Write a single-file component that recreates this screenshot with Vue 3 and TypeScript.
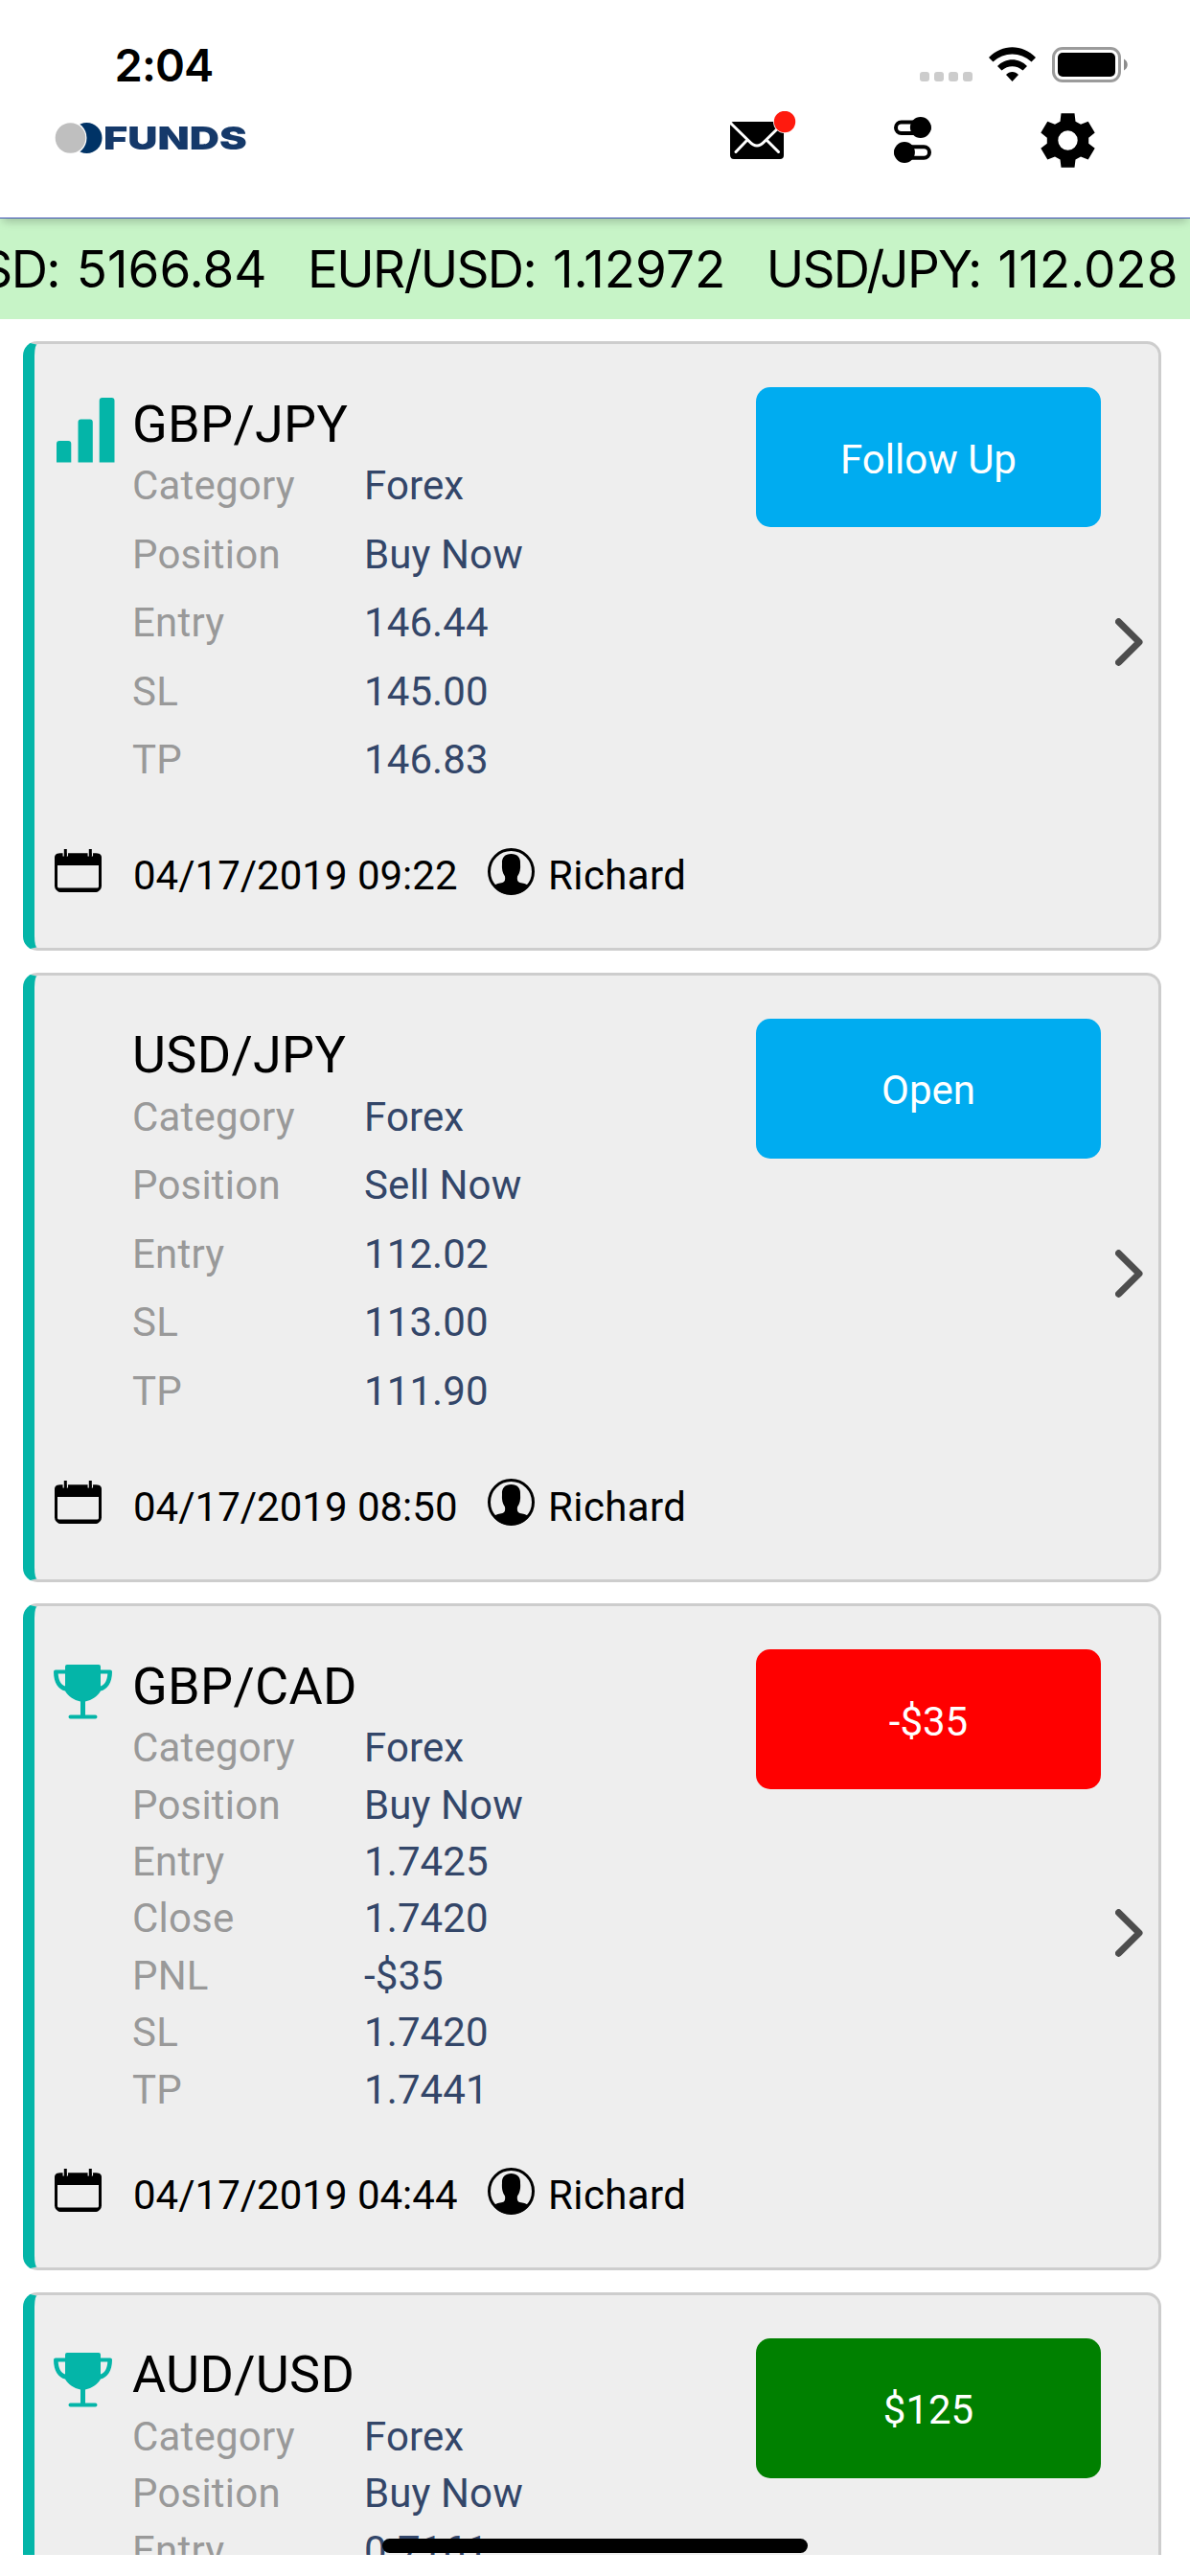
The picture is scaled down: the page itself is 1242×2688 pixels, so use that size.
<script setup lang="ts">
interface Row {
  label: string
  value: string
}

interface Quote {
  symbol: string
  price: string
}

interface Signal {
  pair: string
  icon: 'bars' | 'trophy' | null
  rows: Row[]
  action: string
  tone: 'blue' | 'red' | 'green'
  date?: string
  author?: string
}

const ticker: Quote[] = [
  { symbol: 'BTC/USD:', price: '5166.84' },
  { symbol: 'EUR/USD:', price: '1.12972' },
  { symbol: 'USD/JPY:', price: '112.028' },
]

const signals: Signal[] = [
  {
    pair: 'GBP/JPY',
    icon: 'bars',
    rows: [
      { label: 'Category', value: 'Forex' },
      { label: 'Position', value: 'Buy Now' },
      { label: 'Entry', value: '146.44' },
      { label: 'SL', value: '145.00' },
      { label: 'TP', value: '146.83' },
    ],
    action: 'Follow Up',
    tone: 'blue',
    date: '04/17/2019 09:22',
    author: 'Richard',
  },
  {
    pair: 'USD/JPY',
    icon: null,
    rows: [
      { label: 'Category', value: 'Forex' },
      { label: 'Position', value: 'Sell Now' },
      { label: 'Entry', value: '112.02' },
      { label: 'SL', value: '113.00' },
      { label: 'TP', value: '111.90' },
    ],
    action: 'Open',
    tone: 'blue',
    date: '04/17/2019 08:50',
    author: 'Richard',
  },
  {
    pair: 'GBP/CAD',
    icon: 'trophy',
    rows: [
      { label: 'Category', value: 'Forex' },
      { label: 'Position', value: 'Buy Now' },
      { label: 'Entry', value: '1.7425' },
      { label: 'Close', value: '1.7420' },
      { label: 'PNL', value: '-$35' },
      { label: 'SL', value: '1.7420' },
      { label: 'TP', value: '1.7441' },
    ],
    action: '-$35',
    tone: 'red',
    date: '04/17/2019 04:44',
    author: 'Richard',
  },
  {
    pair: 'AUD/USD',
    icon: 'trophy',
    rows: [
      { label: 'Category', value: 'Forex' },
      { label: 'Position', value: 'Buy Now' },
      { label: 'Entry', value: '0.7161' },
    ],
    action: '$125',
    tone: 'green',
  },
]
</script>

<template>
  <div class="screen">
    <header class="header">
      <div class="status">
        <span class="clock">2:04</span>
        <div class="indicators">
          <div class="dots"><i /><i /><i /><i /></div>
          <svg class="wifi" width="49" height="36" viewBox="0 0 49 36">
            <path d="M0 11C14-3.500 35-3.500 49 11L44.500 15.500C33 4.700 16 4.700 4.500 15.500Z" />
            <path d="M9 20C17.500 11 31.500 11 40 20L35.500 24.500C29 18.700 20 18.700 13.500 24.500Z" />
            <path d="M18 29C21.500 25 27.500 25 31 29L24.500 36Z" />
          </svg>
          <svg class="battery" width="80" height="37" viewBox="0 0 80 37">
            <rect x="1.500" y="1.500" width="69" height="34" rx="9.500" fill="none" stroke="#9b9b9b" stroke-width="3" />
            <rect x="6" y="6" width="60" height="25" rx="5" />
            <path d="M75 12.500C80 15 80 22 75 24.500Z" fill="#8c8c8c" />
          </svg>
        </div>
      </div>
      <div class="toolbar">
        <div class="logo">
          <svg width="52" height="36" viewBox="0 0 52 36">
            <circle cx="34.500" cy="18" r="16" fill="#003366" />
            <circle cx="16.500" cy="18" r="18" fill="#fff" />
            <circle cx="17.500" cy="18" r="15.800" fill="#bfbfbf" />
          </svg>
          <span class="brand">FUNDS</span>
        </div>
        <div class="tools">
          <svg class="mail" width="70" height="54" viewBox="0 0 70 54">
            <rect x="0" y="11" width="56" height="39" rx="4" />
            <path d="M-1 11L20 31.500C25.500 37.500 30.500 37.500 36 31.500L57 11M17.500 30.500L6 42.500M38.500 30.500L50.500 42.500" fill="none" stroke="#fff" stroke-width="3" stroke-linecap="round" />
            <circle cx="57" cy="11" r="12" fill="#fff" />
            <circle cx="57" cy="11" r="11.200" fill="#ff1a0e" />
          </svg>
          <svg class="toggles" width="39" height="48" viewBox="0 0 39 48">
            <rect x="2" y="5.500" width="35" height="11.500" rx="5.750" fill="none" stroke="#000" stroke-width="4" />
            <circle cx="27.800" cy="11" r="10.900" />
            <rect x="2" y="31.300" width="35" height="11.500" rx="5.750" fill="none" stroke="#000" stroke-width="4" />
            <circle cx="11" cy="37" r="10.900" />
          </svg>
          <svg class="gear" width="57" height="57" viewBox="0 0 57 57">
            <path fill-rule="evenodd" d="M21.500 0.300H35.500L36.500 8.700L42 11.800L49.700 8.700L56.700 20.600L50.200 25.700V31.700L56.700 36.700L49.700 48.500L42 45.400L36.500 48.500L35.500 56.700H21.500L20.500 48.500L15 45.400L7.300 48.500L0.300 36.700L6.800 31.700V25.700L0.300 20.600L7.300 8.700L15 11.800L20.500 8.700ZM28.500 18.300A10.200 10.200 0 1 0 28.500 38.700A10.200 10.200 0 1 0 28.500 18.300Z" />
          </svg>
        </div>
      </div>
    </header>

    <div class="ticker">
      <div v-for="quote in ticker" :key="quote.symbol" class="quote">
        <span class="symbol">{{ quote.symbol }}</span>
        <span class="price">{{ quote.price }}</span>
      </div>
    </div>

    <main class="list">
      <article v-for="signal in signals" :key="signal.pair" class="card" :class="{ tall: signal.icon === 'trophy' }">
        <div class="top">
          <div class="badge">
            <svg v-if="signal.icon === 'bars'" class="bars" width="61" height="68" viewBox="0 0 61 68">
              <path d="M0 67.500V48Q0 45 3 45H12.300Q15.300 45 15.300 48V67.500ZM22.500 67.500V25.500Q22.500 22.500 25.500 22.500H34.800Q37.800 22.500 37.800 25.500V67.500ZM44.700 67.500V3Q44.700 0 47.700 0H57.500Q60.500 0 60.500 3V67.500Z" />
            </svg>
            <svg v-else-if="signal.icon === 'trophy'" class="trophy" width="61" height="57" viewBox="0 0 61 57">
              <path d="M14 0H47Q49 0 49 2V5.500H59Q61 5.500 61 7.500C61 19 56 26 49 27.500C46 33 40 37 33 38.500V52.500H43.500A2 2 0 0 1 43.500 56.500H17.500A2 2 0 0 1 17.500 52.500H28V38.500C21 37 15 33 12 27.500C5 26 0 19 0 7.500Q0 5.500 2 5.500H12V2Q12 0 14 0ZM12 9.500H4.700C5 16 7.500 21 12 22.500ZM49 9.500V22.500C53.500 21 56 16 56.300 9.500Z" fill-rule="evenodd" />
            </svg>
          </div>
          <div class="details">
            <h2>{{ signal.pair }}</h2>
            <dl>
              <div v-for="row in signal.rows" :key="row.label" class="row">
                <dt>{{ row.label }}</dt>
                <dd>{{ row.value }}</dd>
              </div>
            </dl>
          </div>
          <button class="action" :class="signal.tone" type="button">{{ signal.action }}</button>
        </div>

        <svg class="chevron" width="29" height="50" viewBox="0 0 29 50">
          <path d="M3.500 3.700L25 25L3.500 46.300" fill="none" stroke="#4d4d4d" stroke-width="7" stroke-linecap="round" stroke-linejoin="round" />
        </svg>

        <footer v-if="signal.date" class="meta">
          <svg class="calendar" width="49" height="45" viewBox="0 0 49 45">
            <rect x="1.500" y="6" width="46" height="37" rx="4.500" fill="none" stroke="#000" stroke-width="3" />
            <path d="M0 17V9Q0 4.500 4.500 4.500H44.500Q49 4.500 49 9V17ZM2 40.500H47V42Q46 45 43 45H6Q3 45 2 42Z" />
            <path d="M9.300 3V7.500M13.300 3V7.500M35.300 3V7.500M39.300 3V7.500" stroke="#eee" stroke-width="1.500" />
            <path d="M11.300 0V7.500M37.300 0V7.500" stroke="#000" stroke-width="3" />
          </svg>
          <span class="date">{{ signal.date }}</span>
          <svg class="avatar" width="49" height="49" viewBox="0 0 49 49">
            <circle cx="24.500" cy="24.500" r="23" fill="none" stroke="#000" stroke-width="3" />
            <path d="M24.500 6C31 6 34.500 10 34 16C34.500 22 33.500 26 31 29.500C30.500 33 31 35 33.500 36C37 36.500 40 37 43 39.500C38.500 45.500 32 48.500 24.500 48.500S10.500 45.500 6 39.500C9 37 12 36.500 15.500 36C18 35 18.500 33 18 29.500C15.500 26 14.500 22 15 16C14.500 10 18 6 24.500 6Z" />
          </svg>
          <span class="author">{{ signal.author }}</span>
        </footer>
      </article>
    </main>

    <div class="home-indicator" />
  </div>
</template>

<style>
body {
  margin: 0;
  background: #fff;
}
</style>

<style scoped>
.screen {
  position: relative;
  width: 1242px;
  height: 2688px;
  overflow: hidden;
  display: flex;
  flex-direction: column;
  background: #fff;
  color: #000;
  font-family: Roboto, sans-serif;
}

.header {
  position: relative;
  z-index: 1;
  flex: none;
  box-sizing: border-box;
  height: 228px;
  border-bottom: 1px solid #3f51b5;
  background: #fff;
  box-shadow: 0 6px 9px -3px rgba(0, 0, 0, 0.22);
}

.status {
  display: flex;
  justify-content: space-between;
  box-sizing: border-box;
  height: 106px;
  padding: 38px 64px 0 119.500px;
}

.clock {
  font: 600 47px/60px Inter, sans-serif;
  letter-spacing: -0.900px;
}

.indicators {
  display: flex;
  align-items: flex-start;
  padding-top: 11px;
}

.dots {
  display: flex;
  gap: 5px;
  padding-top: 26px;
}

.dots i {
  width: 10px;
  height: 10px;
  border-radius: 3px;
  background: #ccc;
}

.wifi {
  margin-left: 17px;
}

.battery {
  margin-left: 17px;
}

.toolbar {
  display: flex;
  justify-content: space-between;
  padding: 10px 99.500px 0 56px;
}

.logo {
  display: flex;
  height: 36px;
  padding-top: 10px;
  filter: blur(0.7px);
}

.logo svg {
  flex: none;
}

.brand {
  color: #15396a;
  font: 900 33px/36px Inter, sans-serif;
  transform: scaleX(1.310);
  transform-origin: left center;
}

.tools {
  display: flex;
  align-items: flex-start;
}

.toggles {
  margin: 6px 0 0 101px;
}

.gear {
  margin: 2px 0 0 113.500px;
}

.ticker {
  flex: none;
  display: flex;
  justify-content: flex-end;
  gap: 42.500px;
  box-sizing: border-box;
  height: 105px;
  padding: 21px 12.500px 0 0;
  overflow: hidden;
  background: #c7f4c7;
  font: 400 53px/64px Inter, sans-serif;
  white-space: nowrap;
}

.quote {
  flex: none;
  display: flex;
  gap: 18px;
}

.symbol {
  letter-spacing: -1.700px;
}

.price {
  letter-spacing: 0;
}

.list {
  flex: none;
  display: flex;
  flex-direction: column;
  gap: 22.600px;
  box-sizing: border-box;
  height: 2333px;
  padding: 23px 30px 0 24px;
  overflow: hidden;
}

.card {
  position: relative;
  flex: none;
  display: flex;
  flex-direction: column;
  justify-content: space-between;
  box-sizing: border-box;
  height: 636px;
  border: 3px solid #cdcdcd;
  border-left: 12px solid #04b5a8;
  border-radius: 15px;
  background: #eee;
}

.card.tall {
  height: 696px;
}

.top {
  display: flex;
  align-items: flex-start;
}

.badge {
  flex: none;
  width: 102px;
  fill: #04b5a8;
}

.badge svg {
  display: block;
}

.bars {
  margin: 56px 0 0 22.500px;
}

.trophy {
  margin: 60.500px 0 0 20px;
}

.details {
  flex: 1;
  padding-top: 51.500px;
}

h2 {
  margin: 0;
  font-size: 54px;
  font-weight: 400;
  line-height: 64px;
  letter-spacing: 0.300px;
}

dl {
  display: flex;
  flex-direction: column;
  gap: 21.500px;
  margin: 7.600px 0 0;
}

.tall dl {
  gap: 9.400px;
}

.row {
  display: flex;
  font-size: 42px;
  line-height: 50px;
}

dt {
  width: 242px;
  color: #999;
  letter-spacing: 0.200px;
}

dd {
  margin: 0;
  color: #334669;
  letter-spacing: 0.100px;
}

.action {
  flex: none;
  width: 360px;
  height: 146px;
  margin: 45px 60px 0 0;
  padding: 5px 0 0;
  border: 0;
  border-radius: 15px;
  color: #fff;
  font: 400 42px/50px Roboto, sans-serif;
  text-align: center;
}

.blue {
  background: #00acf0;
}

.red {
  background: #f00;
}

.green {
  background: #008000;
}

.chevron {
  position: absolute;
  top: calc(50% - 29px);
  right: 16px;
}

.meta {
  display: flex;
  align-items: center;
  padding: 0 0 50px 21px;
  font-size: 42px;
  line-height: 50px;
}

.meta svg {
  flex: none;
}

.calendar {
  margin-top: -11px;
}

.date {
  width: 370px;
  margin-left: 33px;
}

.avatar {
  margin: -10px 14px 0 0;
}

.author {
  letter-spacing: 0.400px;
}

.home-indicator {
  position: absolute;
  left: 399px;
  top: 2649px;
  width: 444px;
  height: 15px;
  border-radius: 8px;
  background: #000;
}
</style>
